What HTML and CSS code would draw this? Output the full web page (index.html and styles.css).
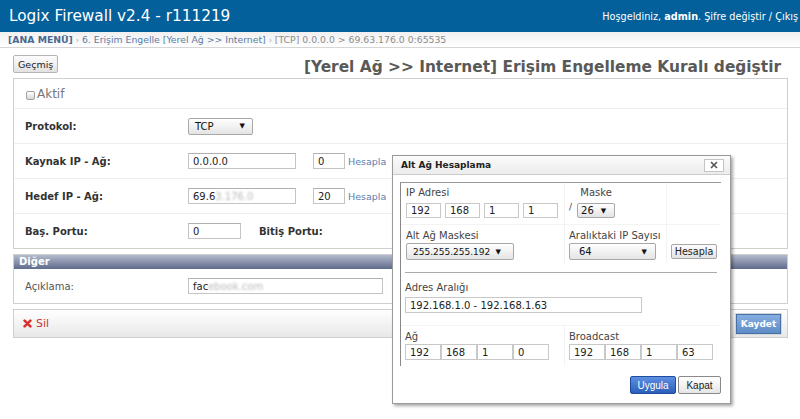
FILE: index.html
```html
<!DOCTYPE html>
<html lang="tr">
<head>
    <meta charset="UTF-8">
    <meta name="viewport" content="width=device-width, initial-scale=1.0">
    <title>Logix Firewall v2.4</title>
    <link rel="stylesheet" href="styles.css">
</head>
<body>
    <div class="topbar">
        <div class="brand">Logix Firewall v2.4 - r111219</div>
        <div class="user">Hoşgeldiniz, <b>admin</b>. <a href="#">Şifre değiştir</a> / <a href="#">Çıkış</a></div>
    </div>

    <div class="crumbs">
        <a href="#" class="home">[ANA MENÜ]</a> <span class="sep">›</span> <a href="#">6. Erişim Engelle [Yerel Ağ &gt;&gt; Internet]</a> <span class="sep">›</span> <span>[TCP] 0.0.0.0 &gt; 69.63.176.0 0:65535</span>
    </div>

    <div class="page">
        <div class="page-head">
            <button class="btn btn-history">Geçmiş</button>
            <h2>[Yerel Ağ &gt;&gt; Internet] Erişim Engelleme Kuralı değiştir</h2>
        </div>

        <div class="panel">
            <div class="row row-check">
                <span class="check"></span><span class="check-label">Aktif</span>
            </div>
            <div class="row">
                <span class="lbl">Protokol:</span>
                <span class="sel sel-proto">TCP<i>▼</i></span>
            </div>
            <div class="row">
                <span class="lbl">Kaynak IP - Ağ:</span>
                <input class="inp w-ip" value="0.0.0.0">
                <input class="inp w-cidr" value="0">
                <a class="link" href="#">Hesapla</a>
            </div>
            <div class="row">
                <span class="lbl">Hedef IP - Ağ:</span>
                <span class="inp w-ip">69.6<span class="blur">3.176.0</span></span>
                <input class="inp w-cidr" value="20">
                <a class="link" href="#">Hesapla</a>
            </div>
            <div class="row">
                <span class="lbl">Baş. Portu:</span>
                <input class="inp w-port" value="0">
                <span class="lbl lbl-inline">Bitiş Portu:</span>
            </div>
        </div>

        <div class="panel panel-other">
            <div class="panel-title">Diğer</div>
            <div class="row">
                <span class="lbl lbl-plain">Açıklama:</span>
                <span class="inp w-desc">fac<span class="blur">ebook.com</span></span>
            </div>
        </div>

        <div class="actions">
            <a href="#" class="delete">
                <svg width="9" height="9" viewBox="0 0 9 9"><path d="M1.6 1.6L7.4 7.4M7.4 1.6L1.6 7.4" stroke="#d8302e" stroke-width="2.6" stroke-linecap="round"/></svg>
                Sil
            </a>
            <button class="btn-save">Kaydet</button>
        </div>
    </div>

    <!-- subnet calculator popup -->
    <div class="dialog">
        <div class="dlg-head">
            <span class="dlg-title">Alt Ağ Hesaplama</span>
            <span class="dlg-close"><svg width="8" height="8" viewBox="0 0 8 8"><path d="M1 1L7 7M7 1L1 7" stroke="#555" stroke-width="1.6"/></svg></span>
        </div>
        <div class="dlg-body">
            <div class="calc">
                <div class="calc-row r1">
                    <div class="cell c1">
                        <div class="cap">IP Adresi</div>
                        <div class="octets spaced">
                            <input class="dinp" value="192">
                            <input class="dinp" value="168">
                            <input class="dinp" value="1">
                            <input class="dinp" value="1">
                        </div>
                    </div>
                    <div class="cell c2 mask">
                        <span class="slash">/</span>
                        <div class="mask-col">
                            <div class="cap">Maske</div>
                            <span class="sel sel-mask">26<i>▼</i></span>
                        </div>
                    </div>
                    <div class="cell c3"></div>
                </div>
                <div class="calc-row r2">
                    <div class="cell c1">
                        <div class="cap">Alt Ağ Maskesi</div>
                        <span class="sel sel-net">255.255.255.192<i>▼</i></span>
                    </div>
                    <div class="cell c2">
                        <div class="cap">Aralıktaki IP Sayısı</div>
                        <span class="sel sel-count">64<i>▼</i></span>
                    </div>
                    <div class="cell c3 bottom">
                        <button class="btn btn-calc">Hesapla</button>
                    </div>
                </div>
                <div class="calc-rule"></div>
                <div class="calc-row r3">
                    <div class="cell">
                        <div class="cap">Adres Aralığı</div>
                        <input class="dinp w-range" value="192.168.1.0 - 192.168.1.63">
                    </div>
                </div>
                <div class="calc-row r4">
                    <div class="cell c1">
                        <div class="cap">Ağ</div>
                        <div class="octets">
                            <input class="dinp wide" value="192">
                            <input class="dinp wide" value="168">
                            <input class="dinp wide" value="1">
                            <input class="dinp wide" value="0">
                        </div>
                    </div>
                    <div class="cell c2 c2-wide">
                        <div class="cap">Broadcast</div>
                        <div class="octets">
                            <input class="dinp wide" value="192">
                            <input class="dinp wide" value="168">
                            <input class="dinp wide" value="1">
                            <input class="dinp wide" value="63">
                        </div>
                    </div>
                </div>
            </div>
            <div class="dlg-actions">
                <button class="btn-apply">Uygula</button>
                <button class="btn-close">Kapat</button>
            </div>
        </div>
    </div>
</body>
</html>
```

FILE: styles.css
```css
* {
    margin: 0;
    padding: 0;
    box-sizing: border-box;
}

body {
    background-color: #ffffff;
    color: #222;
    font-family: "DejaVu Sans", Verdana, sans-serif;
    font-size: 10px;
}

a {
    text-decoration: none;
}

button,
input {
    font-family: "DejaVu Sans", Verdana, sans-serif;
    font-size: 10px;
    color: #222;
}

/* top bar */
.topbar {
    height: 32px;
    background-color: #03609b;
    color: #ffffff;
    display: flex;
    justify-content: space-between;
    align-items: center;
    padding: 0 2px 0 9px;
}

.brand {
    font-size: 15.3px;
}

.user {
    font-size: 9.7px;
}

.user a {
    color: #ffffff;
}

.crumbs {
    height: 16px;
    line-height: 15px;
    padding-left: 8px;
    background: linear-gradient(#f0f0f0, #ffffff);
    border-bottom: 1px solid #d6d6d6;
    font-size: 9.3px;
    color: #8c8c8c;
    white-space: nowrap;
}

.crumbs a {
    color: #5b7aa6;
}

.crumbs a.home {
    color: #4a6892;
    font-weight: bold;
}

.crumbs .sep {
    color: #aaa;
    font-size: 8px;
}

/* page */
.page {
    margin: 7px 12px 0 13px;
}

.page-head {
    display: flex;
    justify-content: space-between;
    height: 23px;
}

.page-head h2 {
    align-self: flex-end;
    font-size: 15.4px;
    line-height: 18px;
    padding: 0 7px 2px 0;
    color: #595959;
}

.btn {
    height: 18px;
    padding: 0 4px;
    border: 1px solid #b4b4b4;
    border-radius: 2px;
    background: linear-gradient(#fdfdfd, #e2e2e2);
    cursor: pointer;
}

.btn-history {
    font-size: 9.5px;
}

.panel {
    border: 1px solid #cfcfcf;
    background-color: #ffffff;
}

.row {
    display: flex;
    align-items: center;
    height: 35px;
    padding-left: 11px;
    border-bottom: 1px solid #efefef;
}

.row:last-child {
    height: 34px;
    border-bottom: none;
}

.row-check {
    height: 30px;
    padding-left: 12px;
}

.check {
    width: 9px;
    height: 9px;
    margin: 3px 2px 0 0;
    border: 1px solid #a0a0a0;
    border-radius: 2px;
    background: linear-gradient(#ffffff, #d8d8d8);
}

.check-label {
    font-size: 12px;
    color: #777;
}

.lbl {
    width: 163px;
    font-weight: bold;
    color: #333;
}

.lbl-inline {
    width: auto;
    margin-left: 18px;
}

.lbl-plain {
    font-weight: normal;
    color: #555;
}

.inp {
    display: inline-flex;
    align-items: center;
    height: 16px;
    padding: 0 4px;
    border: 1px solid #c4c4c4;
    border-top-color: #b0b0b0;
    background-color: #ffffff;
    color: #222;
    outline: none;
}

.w-ip {
    width: 108px;
}

.w-cidr {
    width: 32px;
    margin-left: 17px;
}

.w-port {
    width: 53px;
}

.w-desc {
    width: 195px;
}

.blur {
    color: #b8b8b8;
    filter: blur(1.2px);
}

.link {
    margin-left: 3px;
    color: #5b7db0;
    font-size: 9.5px;
}

.sel {
    display: inline-flex;
    align-items: center;
    justify-content: space-between;
    height: 17px;
    padding: 0 7px 0 6px;
    border: 1px solid #a8a8a8;
    border-radius: 2px;
    background: linear-gradient(#ffffff, #e4e4e4);
    color: #111;
}

.sel i {
    font-style: normal;
    font-size: 7px;
}

.sel-proto {
    width: 65px;
}

/* other section */
.panel-other {
    margin-top: 5px;
}

.panel-title {
    height: 14px;
    line-height: 14px;
    padding-left: 5px;
    background: linear-gradient(#b3bbcd, #5f6b8c);
    color: #ffffff;
    font-weight: bold;
}

.actions {
    margin-top: 5px;
    height: 29px;
    display: flex;
    justify-content: space-between;
    align-items: center;
    padding: 0 6px 0 9px;
    border: 1px solid #cfcfcf;
    background: linear-gradient(#ffffff, #e8e8e8);
}

.delete {
    display: flex;
    align-items: center;
    gap: 4px;
    color: #cc3232;
    font-size: 11px;
}

.btn-save {
    height: 20px;
    width: 45px;
    border: 1px solid #4670a8;
    background: linear-gradient(#86aee0, #5f8cc6);
    color: #ffffff;
    font-weight: bold;
    font-size: 9px;
    box-shadow: 0 0 0 1px #d6d6d6;
}

/* subnet dialog */
.dialog {
    position: absolute;
    left: 392px;
    top: 155px;
    width: 339px;
    background-color: #ffffff;
    border: 1px solid #9a9a9a;
    box-shadow: 2px 2px 3px rgba(0, 0, 0, 0.35);
}

.dlg-head {
    height: 19px;
    display: flex;
    justify-content: space-between;
    align-items: center;
    padding: 0 6px 0 8px;
    background: linear-gradient(#fbfbfb, #ececec);
    border-bottom: 1px solid #cccccc;
}

.dlg-title {
    font-weight: bold;
    font-size: 9px;
    color: #222;
}

.dlg-close {
    width: 20px;
    height: 13px;
    display: flex;
    align-items: center;
    justify-content: center;
    border: 1px solid #c4c4c4;
    background-color: #ffffff;
}

.dlg-body {
    padding: 7px 9px 9px 7px;
}

.calc {
    border-left: 1px solid #888;
    border-top: 1px solid #9a9a9a;
}

.calc-row {
    display: flex;
}

.cell {
    padding-left: 5px;
}

.c1 {
    width: 163px;
}

.c2 {
    width: 102px;
    padding-left: 4px;
    border-left: 1px solid #f3f3f3;
}

.c2-wide {
    width: 156px;
}

.c3 {
    flex: 1;
    padding-left: 4px;
    border-left: 1px solid #f3f3f3;
}

.cap {
    line-height: 12px;
    color: #444;
}

.r1 {
    height: 42px;
    padding-top: 4px;
    border-bottom: 1px solid #f3f3f3;
}

.r1 .c3,
.r1 .c2 {
    margin-top: -4px;
    padding-top: 4px;
}

.octets {
    display: flex;
    margin-top: 4px;
}

.octets.spaced {
    gap: 4px;
}

.dinp {
    width: 35px;
    height: 15px;
    padding: 0 4px;
    border: 1px solid #c8c8c8;
    outline: none;
}

.dinp.wide {
    width: 36px;
    height: 16px;
}

.r4 .octets {
    margin-top: 1px;
}

.mask {
    display: flex;
}

.slash {
    font-size: 9px;
    padding-top: 15px;
    margin-right: 5px;
    color: #444;
}

.mask-col {
    display: flex;
    flex-direction: column;
    align-items: center;
}

.mask-col .sel {
    margin-top: 4px;
}

.sel-mask {
    width: 38px;
    height: 15px;
    padding: 0 8px 0 3px;
}

.r2 {
    height: 40px;
    padding-top: 5px;
}

.r2 .c2,
.r2 .c3 {
    margin-top: -5px;
    padding-top: 5px;
}

.r2 .sel {
    margin-top: 1px;
}

.sel-net {
    width: 108px;
    padding: 0 12px 0 6px;
    font-size: 9px;
}

.sel-count {
    width: 87px;
    padding: 0 8px 0 9px;
}

.bottom {
    display: flex;
    align-items: flex-end;
    padding-bottom: 6px;
}

.btn-calc {
    width: 46px;
    height: 15px;
    padding: 0;
    font-size: 9.6px;
    border-color: #a6a6a6;
}

.calc-rule {
    height: 1px;
    margin: 7px 4px 0 4px;
    background-color: #aaaaaa;
}

.r3 {
    padding: 9px 0 12px;
    border-bottom: 1px solid #f3f3f3;
}

.r3 .cell,
.r4 .cell {
    padding-left: 4px;
}

.r3 .dinp {
    margin-top: 3px;
}

.w-range {
    width: 237px;
    height: 16px;
    display: block;
}

.r4 .c1 {
    padding-top: 5px;
    padding-bottom: 6px;
}

.r4 .c2 {
    padding-top: 5px;
    padding-left: 4px;
}

.dlg-actions {
    margin-top: 10px;
    display: flex;
    justify-content: flex-end;
    gap: 2px;
}

.btn-apply,
.btn-close {
    height: 18px;
    font-family: "Liberation Sans", Arial, sans-serif;
    font-size: 10px;
    border-radius: 2px;
    cursor: pointer;
}

.btn-apply {
    width: 46px;
    border: 1px solid #1f4c9c;
    background: linear-gradient(#5d90e2, #2c5fb9);
    color: #ffffff;
}

.btn-close {
    width: 43px;
    border: 1px solid #8a8a8a;
    background: linear-gradient(#ffffff, #e6e6e6);
}
```
